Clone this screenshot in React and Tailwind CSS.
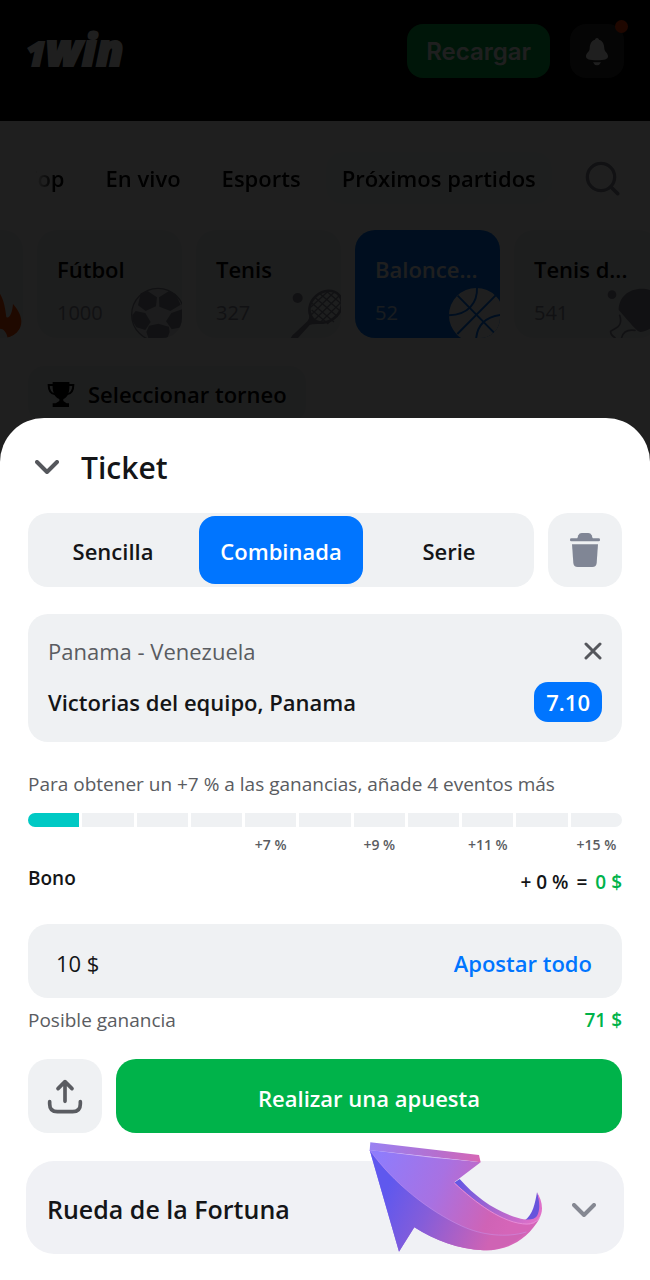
import { useState } from 'react';
import clsx from 'clsx';

const leagues = ['Top', 'En vivo', 'Esports', 'Próximos partidos'];

const sports = [
  { name: 'Fútbol', count: 1000, Icon: FootballIcon },
  { name: 'Tenis', count: 327, Icon: TennisIcon },
  { name: 'Balonce...', count: 52, Icon: BasketballIcon, active: true },
  { name: 'Tenis d...', count: 541, Icon: PingPongIcon },
];

const betTypes = ['Sencilla', 'Combinada', 'Serie'];

const bonusSteps = [null, null, null, null, '+7 %', null, '+9 %', null, '+11 %', null, '+15 %'];

function Logo() {
  return (
    <span className="flex items-baseline font-['Open_Sans',sans-serif] leading-[50px] font-extrabold text-white italic [-webkit-text-stroke:2px_white]">
      <span className="text-[34px] leading-[50px]">1</span>
      <span className="text-[44px] leading-[50px]">win</span>
    </span>
  );
}

function FlameIcon() {
  return (
    <svg viewBox="-84 228 156 156" className="absolute right-0 bottom-0 size-[52px]" fill="#ff4d00">
      <path d="M-40 384 C-70 330 -30 290 -8 236 C14 262 18 290 22 322 C34 326 40 304 42 282 C58 300 67 318 67 334 C67 360 50 378 26 384 C22 362 8 352 -4 358 Z" />
    </svg>
  );
}

function FootballIcon() {
  return (
    <svg viewBox="393 228 156 156" className="absolute right-0 bottom-0 size-[52px]">
      <circle cx="477" cy="314" r="79" fill="#e6e7ea" stroke="#8a8e9c" strokeWidth="4" />
      <g fill="#8a8e9c">
        <path d="M425 250 L446 243 L474 262 L471 289 L440 303 L417 286 Z" />
        <path d="M480 262 L510 243 L530 252 L545 284 L514 303 L481 290 Z" />
        <path d="M400 315 L410 303 L439 309 L455 336 L439 360 L412 352 L400 332 Z" />
        <path d="M517 309 L549 298 V352 L518 358 L501 334 Z" />
        <path d="M450 347 L478 341 L510 350 L512 366 L503 390 H450 L442 366 Z" />
      </g>
    </svg>
  );
}

function TennisIcon() {
  return (
    <svg viewBox="867 228 156 156" className="absolute right-0 bottom-0 size-[52px]" fill="none" stroke="#8a8e9c">
      <circle cx="893" cy="264" r="15" fill="#8a8e9c" stroke="none" />
      <ellipse cx="977" cy="290" rx="53" ry="43" strokeWidth="8" transform="rotate(-42 977 290)" />
      <path
        strokeWidth="4"
        d="M935 300 L985 342 M936 280 L1002 336 M944 262 L1013 320 M958 250 L1020 302 M978 242 L1022 280 M932 292 L985 243 M934 314 L1005 244 M946 327 L1020 255 M962 336 L1022 278 M984 340 L1020 306"
      />
      <path fill="#8a8e9c" stroke="none" d="M932 318 L950 338 L930 344 L894 384 H872 Q875 376 884 370 L922 334 Z" />
      <path strokeWidth="6" d="M932 308 L928 340 L968 338" />
    </svg>
  );
}

function BasketballIcon() {
  return (
    <svg viewBox="369 228 156 156" className="absolute right-0 bottom-0 size-[52px]">
      <circle cx="454" cy="316" r="82" fill="#fff" />
      <g fill="none" stroke="#0075ff" strokeWidth="6">
        <path d="M398 257 L507 368" />
        <path d="M512 256 L397 372" />
        <path d="M456 232 C458 278 430 314 372 316" />
        <path d="M536 314 C486 318 456 342 453 390" />
      </g>
    </svg>
  );
}

function PingPongIcon() {
  return (
    <svg viewBox="846 228 156 156" className="absolute right-0 bottom-0 size-[52px]">
      <circle cx="861" cy="254" r="13" fill="#8a8e9c" />
      <path
        fill="#8a8e9c"
        d="M881 300 C881 262 910 236 950 236 C985 236 1010 255 1010 290 C1010 330 985 360 948 366 C938 366 930 356 881 300 Z"
      />
      <path
        fill="none"
        stroke="#8a8e9c"
        strokeWidth="5"
        strokeLinecap="round"
        d="M884 316 C890 334 886 348 872 355 L857 364 C856 372 862 378 870 383 M890 383 C894 366 908 358 930 361"
      />
    </svg>
  );
}

function TrophyIcon() {
  return (
    <svg viewBox="141 507 84 81" className="h-[27px] w-7" aria-hidden="true">
      <path d="M158 510 H208 C210 540 204 556 190 561 V567 L200 574 H207 V585 H158 V574 H167 L178 567 V561 C163 556 156 540 158 510 Z" />
      <path d="M160 519 H146 C146 534 152 546 166 547 M206 519 H220 C220 534 214 546 200 547" fill="none" stroke="#000" strokeWidth="6" />
    </svg>
  );
}

function BellIcon() {
  return (
    <svg viewBox="780 110 72 87" className="h-[29px] w-6" fill="#fff" aria-hidden="true">
      <path d="M816 113 C819 113 821 116 822 118 C834 122 837 131 838 145 C839 156 849 157 849 168 C849 177 838 180 816 180 C794 180 783 177 783 168 C783 157 793 156 794 145 C795 131 798 122 810 118 C811 116 813 113 816 113 Z" />
      <path d="M804 186 H828 Q824 195 816 195 Q808 195 804 186 Z" />
    </svg>
  );
}

function SearchIcon() {
  return (
    <svg viewBox="780 477 105 105" className="size-[35px]" fill="none" stroke="#8a8e9c" aria-hidden="true">
      <circle cx="828" cy="525" r="41" strokeWidth="10" />
      <path d="M858 555 L878 575" strokeWidth="11" strokeLinecap="round" />
    </svg>
  );
}

function TrashIcon() {
  return (
    <svg viewBox="729 333 102 114" className="h-[38px] w-[34px]" fill="#808695" aria-hidden="true">
      <path d="M756 358 L760 346 Q763 339 770 339 H790 Q797 339 800 346 L804 358 Z" />
      <rect x="735" y="355" width="90" height="9" rx="4" />
      <path d="M741 373 H819 L815 429 Q814 441 802 441 H758 Q746 441 745 429 Z" />
    </svg>
  );
}

function ShareIcon() {
  return (
    <svg
      viewBox="141 534 108 108"
      className="size-9"
      fill="none"
      stroke="#5a5c61"
      strokeWidth="11"
      strokeLinecap="round"
      strokeLinejoin="round"
      aria-hidden="true"
    >
      <path d="M149 605 V612 Q149 635 172 635 H218 Q241 635 241 612 V605" />
      <path d="M195 604 V545 M174 566 L195 545 L216 566" />
    </svg>
  );
}

function ChevronIcon({ className }) {
  return (
    <svg viewBox="0 0 24 14" className={clsx('h-[14px] w-6', className)} fill="none" stroke="currentColor" strokeWidth="4" strokeLinecap="round" strokeLinejoin="round" aria-hidden="true">
      <path d="M2 2 L12 12 L22 2" />
    </svg>
  );
}

function CloseIcon() {
  return (
    <svg viewBox="0 0 18 18" className="size-[18px]" fill="none" stroke="#55575c" strokeWidth="3" strokeLinecap="round" aria-hidden="true">
      <path d="M2 2 L16 16 M16 2 L2 16" />
    </svg>
  );
}

function PointerArrow() {
  return (
    <svg viewBox="129 720 534 342" className="pointer-events-none absolute -top-[21px] right-[78px] h-[114px] w-[178px]" aria-hidden="true">
      <defs>
        <linearGradient id="arrowFace" gradientUnits="userSpaceOnUse" x1="150" y1="800" x2="560" y2="960">
          <stop offset="0" stopColor="#8f7cfb" />
          <stop offset="0.45" stopColor="#a871e2" />
          <stop offset="0.85" stopColor="#cf63b6" />
          <stop offset="1" stopColor="#d565b8" />
        </linearGradient>
        <linearGradient id="arrowShade" gradientUnits="userSpaceOnUse" x1="180" y1="880" x2="500" y2="1010">
          <stop offset="0" stopColor="#5f58ee" />
          <stop offset="0.4" stopColor="#855dd9" />
          <stop offset="1" stopColor="#cf63b4" />
        </linearGradient>
        <linearGradient id="arrowRim" gradientUnits="userSpaceOnUse" x1="136" y1="740" x2="466" y2="780">
          <stop offset="0" stopColor="#9a82f2" />
          <stop offset="0.6" stopColor="#b56fcf" />
          <stop offset="1" stopColor="#d766b4" />
        </linearGradient>
        <linearGradient id="arrowEdge" gradientUnits="userSpaceOnUse" x1="395" y1="840" x2="630" y2="960">
          <stop offset="0" stopColor="#6257e4" />
          <stop offset="0.5" stopColor="#a565d0" />
          <stop offset="1" stopColor="#e070c8" />
        </linearGradient>
      </defs>
      <path fill="#6854dc" d="M636 877 C630 910 624 945 598 962 L632 968 C650 945 648 905 636 877 Z" />
      <path
        fill="url(#arrowEdge)"
        d="M404 837 L386 849 C450 912 540 980 610 975 C638 972 651 948 651 925 C651 906 644 890 636 877 C644 905 646 930 636 948 C628 960 606 962 580 954 C515 936 452 892 404 837 Z"
      />
      <path fill="url(#arrowRim)" d="M136 727 L462 765 L467 787 L134 751 Z" />
      <path
        fill="url(#arrowFace)"
        d="M134 750 L467 787 L388 847 C450 905 535 972 606 974 Q630 974 646 952 C604 1025 545 1052 475 1051 C400 1048 330 1022 268 982 L222 1055 Z"
      />
      <path
        fill="url(#arrowShade)"
        d="M134 750 C205 850 315 935 410 978 C470 1006 545 1014 604 996 C560 1036 525 1051 475 1051 C400 1048 330 1022 268 982 L222 1055 Z"
      />
      <path fill="none" stroke="#c99af0" strokeOpacity="0.7" strokeWidth="2" d="M134 750 C205 850 315 935 410 978 C470 1006 545 1014 604 996" />
      <path fill="#e5c8f8" fillOpacity="0.7" d="M134 750 L467 786 L320 773 Z" />
      <path fill="none" stroke="#e78bd6" strokeWidth="3" d="M388 849 C450 907 535 972 606 972 Q628 972 642 956" />
    </svg>
  );
}

function SportCard({ sport }) {
  const { name, count, Icon, active } = sport;
  return (
    <button
      type="button"
      className={clsx(
        'relative flex h-[108px] w-[145px] shrink-0 flex-col overflow-hidden rounded-[20px] pt-6 pl-5 text-left',
        active ? 'bg-[#0075ff] text-white' : 'bg-[#eff1f3] text-black'
      )}
    >
      <span className="text-[22px] leading-[30px] font-[550]">{name}</span>
      <span className={clsx('mt-[14px] text-xl leading-[30px]', active ? 'text-white/80' : 'text-[#8a8e9c]')}>{count}</span>
      <Icon />
    </button>
  );
}

function Backdrop() {
  return (
    <div className="relative bg-white">
      <header className="flex items-start justify-between bg-black pt-6 pr-[26px] pb-[43px] pl-[26px]">
        <a href="#inicio">
          <Logo />
        </a>
        <div className="flex gap-5">
          <button type="button" className="h-[54px] rounded-2xl bg-[#00b34a] px-[19px] pt-0.5 font-['Inter',sans-serif] text-2xl font-semibold text-white">
            Recargar
          </button>
          <button type="button" aria-label="Notificaciones" className="relative flex size-[54px] items-center justify-center rounded-2xl bg-[#2b2b2b]">
            <BellIcon />
            <span className="absolute -top-1 -right-1 size-[13px] rounded-full bg-[#ff3d00]" />
          </button>
        </div>
      </header>

      <div className="mt-[31px] flex h-[52px] items-center justify-between pr-[30px] pl-[25px]">
        <nav className="flex items-center [mask-image:linear-gradient(to_right,transparent_10px,black_30px)]">
          {leagues.map((league, i) => (
            <a
              key={league}
              href="#partidos"
              className={clsx(
                'text-[22px] leading-[52px] font-[550] whitespace-nowrap text-black',
                i === leagues.length - 1 ? 'rounded-2xl bg-[#f7f8f9] px-4' : i === leagues.length - 2 ? 'mr-[25px]' : 'mr-[41px]'
              )}
            >
              {league}
            </a>
          ))}
        </nav>
        <button type="button" aria-label="Buscar">
          <SearchIcon />
        </button>
      </div>

      <div className="mt-[26px] flex gap-[14px] overflow-hidden">
        <div className="relative h-[108px] w-[23px] shrink-0 overflow-hidden rounded-r-[20px] bg-[#eff1f3]">
          <FlameIcon />
        </div>
        {sports.map((sport) => (
          <SportCard key={sport.name} sport={sport} />
        ))}
      </div>

      <button type="button" className="mt-7 ml-7 flex h-14 items-center gap-[13px] rounded-2xl bg-[#eff1f3] px-[19px] text-[22px] font-[550] text-black">
        <TrophyIcon />
        Seleccionar torneo
      </button>
    </div>
  );
}

function BetTabs() {
  const [type, setType] = useState('Combinada');
  return (
    <div className="flex gap-[14px]">
      <div className="grid h-[74px] flex-1 grid-cols-3 gap-1 rounded-[20px] bg-[#eff1f3] p-[3px]">
        {betTypes.map((item) => (
          <button
            key={item}
            type="button"
            onClick={() => setType(item)}
            className={clsx('rounded-2xl pt-0.5 text-[22px] font-[550]', item === type ? 'bg-[#0075ff] text-white' : 'text-[#141517]')}
          >
            {item}
          </button>
        ))}
      </div>
      <button type="button" aria-label="Vaciar ticket" className="flex size-[74px] items-center justify-center rounded-[20px] bg-[#eff1f3]">
        <TrashIcon />
      </button>
    </div>
  );
}

function EventCard() {
  return (
    <article className="mt-[27px] rounded-[20px] bg-[#eff1f3] px-5 pt-[18px] pb-5">
      <div className="flex h-[38px] items-center justify-between">
        <p className="text-[22px] text-[#5a5c61]">Panama - Venezuela</p>
        <button type="button" aria-label="Eliminar evento">
          <CloseIcon />
        </button>
      </div>
      <div className="mt-3 flex h-10 items-center justify-between">
        <p className="text-[22px] font-[550] text-[#141517]">Victorias del equipo, Panama</p>
        <span className="rounded-[14px] bg-[#0075ff] px-3 text-[22px] leading-10 font-[550] text-white">7.10</span>
      </div>
    </article>
  );
}

function BonusProgress() {
  return (
    <section>
      <p className="mt-[27px] text-[19px] leading-[30px] text-[#5a5c61]">Para obtener un +7 % a las ganancias, añade 4 eventos más</p>
      <div className="mt-[14px] grid grid-cols-11 gap-[3px] overflow-hidden rounded-full">
        {bonusSteps.map((step, i) => (
          <div key={i} className={clsx('h-[14px]', i === 0 ? 'bg-[#00c9c4]' : 'bg-[#eff1f3]')} />
        ))}
      </div>
      <div className="mt-2 grid grid-cols-11 gap-[3px] text-sm leading-5 font-[550] text-[#5a5c61]">
        {bonusSteps.map((step, i) => (
          <span key={i} className="text-center whitespace-nowrap">
            {step}
          </span>
        ))}
      </div>
      <div className="mt-2 flex h-[34px] items-start justify-between text-[19px] leading-[30px] font-[550] text-[#141517]">
        <span>Bono</span>
        <span className="flex gap-2 self-end">
          <span>+ 0 %</span>
          <span>=</span>
          <span className="text-[#00b34a]">0 $</span>
        </span>
      </div>
    </section>
  );
}

export default function App() {
  const [amount, setAmount] = useState('10 $');

  return (
    <div className="relative flex min-h-screen flex-col overflow-hidden bg-white font-['Open_Sans','Noto_Sans',sans-serif]">
      <Backdrop />
      <div className="absolute inset-0 bg-black/88" />

      <main className="relative -mt-1 flex-1 rounded-t-[44px] bg-white px-7 pb-6">
        <div className="flex h-[95px] items-center gap-[22px] pt-0.5 pl-[7px]">
          <button type="button" aria-label="Cerrar ticket">
            <ChevronIcon className="text-[#55575c]" />
          </button>
          <h1 className="pt-0.5 text-[30px] font-[550] text-[#141517]">Ticket</h1>
        </div>

        <BetTabs />
        <EventCard />
        <BonusProgress />

        <div className="mt-[27px] flex h-[74px] items-center justify-between rounded-[20px] bg-[#eff1f3] pt-1 pr-[30px] pl-7 text-[22px]">
          <input
            aria-label="Importe"
            value={amount}
            onChange={(e) => setAmount(e.target.value)}
            className="w-40 min-w-0 bg-transparent text-[#141517] outline-none"
          />
          <button type="button" className="font-[550] text-[#0075ff]">
            Apostar todo
          </button>
        </div>

        <div className="mt-[7px] flex justify-between text-[19px] leading-[30px]">
          <span className="text-[#5a5c61]">Posible ganancia</span>
          <span className="font-[550] text-[#00b34a]">71 $</span>
        </div>

        <div className="mt-6 flex gap-[14px]">
          <button type="button" aria-label="Compartir" className="flex size-[74px] items-center justify-center rounded-[20px] bg-[#eff1f3]">
            <ShareIcon />
          </button>
          <button type="button" className="h-[74px] flex-1 rounded-[20px] bg-[#00b34a] pt-1 text-[22px] font-[550] text-white">
            Realizar una apuesta
          </button>
        </div>

        <div className="relative -mx-0.5 mt-7">
          <button
            type="button"
            className="flex h-[93px] w-full items-center justify-between rounded-[28px] bg-[#f0f1f5] pt-1 pr-7 pl-[21px] text-[25px] font-[550] text-[#141517]"
          >
            Rueda de la Fortuna
            <ChevronIcon className="text-[#858892]" />
          </button>
          <PointerArrow />
        </div>
      </main>
    </div>
  );
}
